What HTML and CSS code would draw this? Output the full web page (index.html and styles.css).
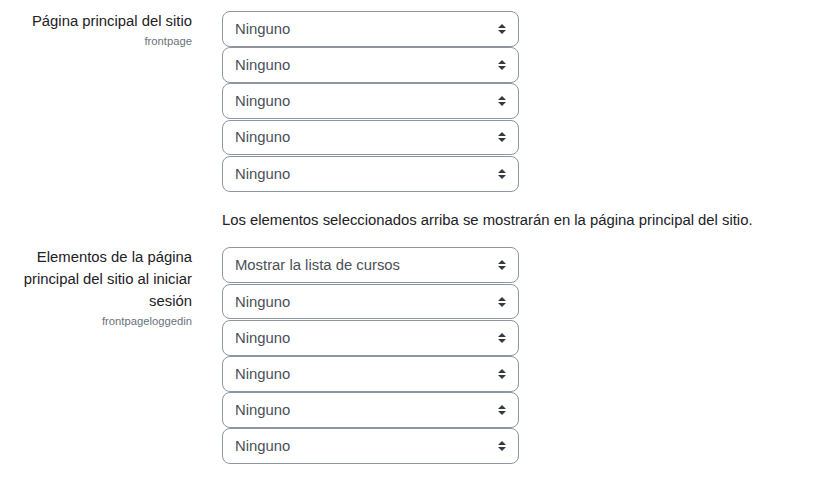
FILE: index.html
```html
<!DOCTYPE html>
<html lang="es">
<head>
<meta charset="utf-8">
<link rel="stylesheet" href="styles.css">
</head>
<body>
<div class="page">
  <div class="setting">
    <div class="label">
      <div class="title">Página principal del sitio</div>
      <div class="short">frontpage</div>
    </div>
    <div class="field">
      <div class="selects">
        <select class="sel"><option>Ninguno</option></select>
        <select class="sel"><option>Ninguno</option></select>
        <select class="sel"><option>Ninguno</option></select>
        <select class="sel"><option>Ninguno</option></select>
        <select class="sel"><option>Ninguno</option></select>
      </div>
      <div class="desc">Los elementos seleccionados arriba se mostrarán en la página principal del sitio.</div>
    </div>
  </div>
  <div class="setting">
    <div class="label">
      <div class="title">Elementos de la página principal del sitio al iniciar sesión</div>
      <div class="short">frontpageloggedin</div>
    </div>
    <div class="field">
      <div class="selects">
        <select class="sel"><option>Mostrar la lista de cursos</option></select>
        <select class="sel"><option>Ninguno</option></select>
        <select class="sel"><option>Ninguno</option></select>
        <select class="sel"><option>Ninguno</option></select>
        <select class="sel"><option>Ninguno</option></select>
        <select class="sel"><option>Ninguno</option></select>
      </div>
    </div>
  </div>
</div>
</body>
</html>
```
FILE: styles.css
```css
html, body {
  margin: 0;
  padding: 0;
  background: #fff;
}
body {
  font-family: "Liberation Sans", Arial, sans-serif;
  font-size: 14.85px;
  color: #1d2125;
}
.page {
  padding-top: 10px;
}
.setting {
  display: grid;
  grid-template-columns: 192px 560px;
  column-gap: 30px;
  align-items: start;
}
.label {
  text-align: right;
}
.title {
  line-height: 22px;
}
.short {
  font-size: 11.25px;
  line-height: 17px;
  color: #6a737b;
  margin-top: 1px;
}
.field {
  padding-top: 1px;
}
.selects {
  display: flex;
  flex-direction: column;
  align-items: flex-start;
}
.sel {
  -webkit-appearance: none;
  appearance: none;
  box-sizing: border-box;
  width: 297px;
  height: 35.8px;
  margin: 0 0 0.4px 0;
  padding: 0 32px 0 12px;
  font-family: "Liberation Sans", Arial, sans-serif;
  font-size: 14.85px;
  color: #495057;
  background-color: #fff;
  background-image: url("data:image/svg+xml;charset=utf8,%3Csvg xmlns='http://www.w3.org/2000/svg' viewBox='0 0 4 5'%3E%3Cpath fill='%23343a40' d='M2 0L0 2h4zm0 5L0 3h4z'/%3E%3C/svg%3E");
  background-repeat: no-repeat;
  background-position: right 12px center;
  background-size: 8px 10px;
  border: 1px solid #8f959e;
  border-radius: 8px;
}
.desc {
  margin-top: 17px;
  margin-bottom: 15.5px;
  line-height: 22px;
  color: #1d2125;
}
```
